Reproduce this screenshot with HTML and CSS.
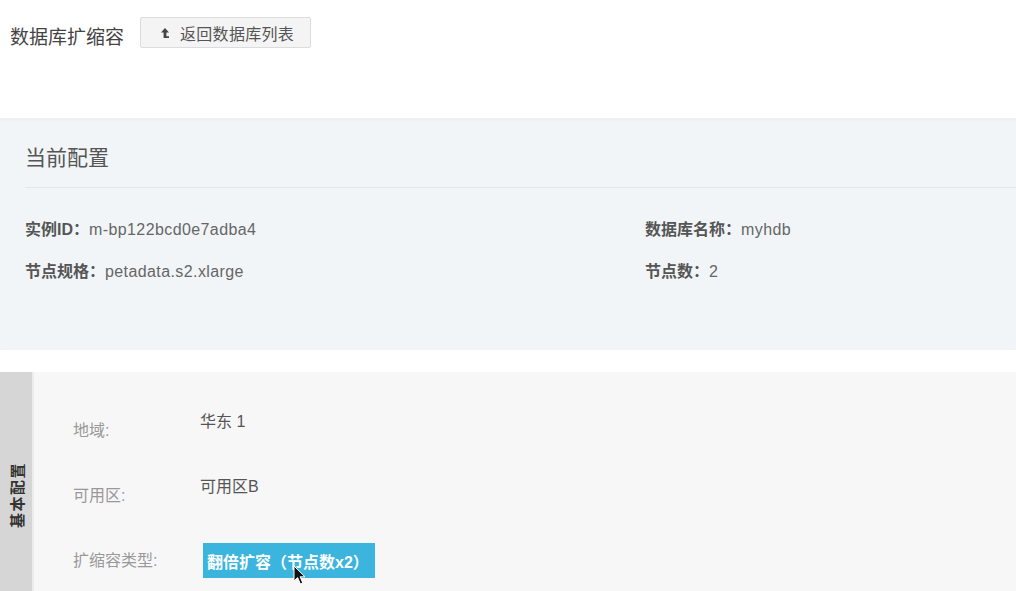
FILE: index.html
```html
<!DOCTYPE html>
<html lang="zh">
<head>
<meta charset="utf-8">
<title>数据库扩缩容</title>
<link rel="stylesheet" href="styles.css">
</head>
<body>
<header class="top">
  <h1 class="page-title">数据库扩缩容</h1>
  <button class="back-btn" type="button">
    <svg class="back-icon" width="8" height="10" viewBox="0 0 8 10"><path d="M4 0 L8 4.5 H5.4 V8.2 H8 V10 H2.6 V4.5 H0 Z" fill="#444"/></svg>
    <span>返回数据库列表</span>
  </button>
</header>

<section class="current">
  <h2 class="current-title">当前配置</h2>
  <div class="current-grid">
    <div class="kv"><b>实例ID：</b><span>m-bp122bcd0e7adba4</span></div>
    <div class="kv"><b>数据库名称：</b><span>myhdb</span></div>
    <div class="kv"><b>节点规格：</b><span>petadata.s2.xlarge</span></div>
    <div class="kv"><b>节点数：</b><span>2</span></div>
  </div>
</section>

<section class="basic">
  <div class="side-tab"><span class="side-text">基本配置</span></div>
  <div class="basic-body">
    <div class="row">
      <div class="label">地域:</div>
      <div class="value">华东 1</div>
    </div>
    <div class="row">
      <div class="label">可用区:</div>
      <div class="value">可用区B</div>
    </div>
    <div class="row row-center">
      <div class="label">扩缩容类型:</div>
      <div class="choice">翻倍扩容（节点数x2）
        <svg class="cursor" width="14" height="21" viewBox="0 0 14 21"><path d="M1 1 L1 16 L4.6 12.6 L7.4 19 L9.8 18 L7.1 11.8 L12 11.8 Z" fill="#111" stroke="#fff" stroke-width="1"/></svg>
      </div>
    </div>
  </div>
</section>
</body>
</html>
```
FILE: styles.css
```css
html, body {
  margin: 0;
  padding: 0;
  overflow: hidden;
  background: #ffffff;
  font-family: "Liberation Sans", "Noto Sans CJK SC", sans-serif;
}

.top {
  display: flex;
  align-items: flex-start;
  gap: 16px;
  padding: 17px 0 0 10px;
  height: 101px;
  box-sizing: border-box;
}

.page-title {
  margin: 0;
  padding-top: 9px;
  font-size: 19px;
  line-height: 24px;
  font-weight: normal;
  color: #444;
}

.back-btn {
  display: flex;
  align-items: center;
  gap: 11px;
  height: 31px;
  width: 171px;
  padding: 0 0 0 20px;
  box-sizing: border-box;
  background: #f4f4f4;
  border: 1px solid #dcdcdc;
  border-radius: 2px;
  font-family: inherit;
  font-size: 16px;
  letter-spacing: 0.3px;
  color: #555;
}

.back-icon { flex: none; }

.current {
  margin-top: 17px;
  background: #f1f5f8;
  padding: 25px 0 67px 25px;
  box-shadow: inset 0 3px 4px -2px rgba(0,0,0,0.04);
}

.current-title {
  margin: 0;
  font-size: 21px;
  line-height: 30px;
  font-weight: normal;
  color: #555;
  padding-bottom: 14px;
  border-bottom: 1px solid #e2e7eb;
}

.current-grid {
  display: grid;
  grid-template-columns: 620px 1fr;
  row-gap: 20px;
  margin-top: 31px;
}

.kv {
  font-size: 16px;
  line-height: 22px;
  color: #666;
}

.kv span { letter-spacing: 0.4px; }

.kv b {
  color: #555;
  font-weight: bold;
}

.basic {
  display: flex;
  margin-top: 22px;
  height: 250px;
  background: #f7f7f7;
}

.side-tab {
  width: 32px;
  flex: none;
  background: #d6d6d6;
  border-right: 2px solid #ececec;
  display: flex;
  align-items: center;
  justify-content: center;
}

.side-text {
  writing-mode: vertical-rl;
  text-orientation: sideways;
  transform: rotate(180deg);
  font-size: 15px;
  font-weight: bold;
  color: #333;
  letter-spacing: 1.5px;
  margin-top: -4px;
}

.basic-body {
  flex: 1;
  padding: 39px 0 0 39px;
}

.row {
  display: flex;
  align-items: flex-start;
  height: 65px;
}

.row-center {
  align-items: center;
  height: 35px;
  margin-top: 2px;
}

.label {
  width: 127px;
  padding-top: 9px;
  font-size: 16px;
  line-height: 22px;
  color: #999;
}

.row-center .label { padding-top: 0; }

.value {
  font-size: 16px;
  line-height: 22px;
  color: #555;
}

.choice {
  position: relative;
  margin-left: 3px;
  height: 35px;
  width: 172px;
  box-sizing: border-box;
  padding-left: 4px;
  display: flex;
  align-items: center;
  background: #3bb4de;
  color: #ffffff;
  font-size: 16px;
  font-weight: bold;
  white-space: nowrap;
}

.cursor {
  position: absolute;
  left: 90px;
  top: 22px;
}
```
